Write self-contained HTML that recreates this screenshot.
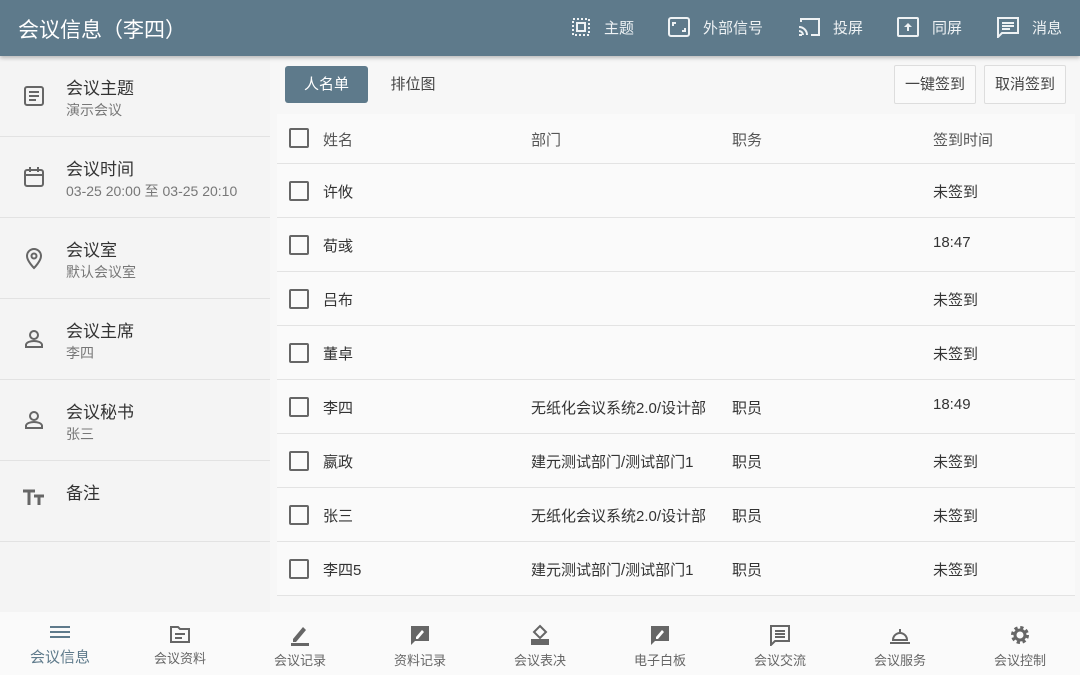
<!DOCTYPE html><html><head><meta charset="utf-8"><style>
*{margin:0;padding:0;box-sizing:border-box}
body{width:1080px;height:675px;overflow:hidden;background:#f7f7f7;font-family:"Liberation Sans","Noto Sans CJK SC",sans-serif;position:relative;color:#333}
.hdr{position:absolute;left:0;top:0;width:1080px;height:56px;background:#5e7a8b;box-shadow:0 2px 4px rgba(0,0,0,.25);z-index:2}
.hdr .t{position:absolute;left:18px;top:14px;font-size:21px;color:#fff}
.hi{position:absolute;top:16px;color:#eef2f4;font-size:15px;display:flex;align-items:center}
.hi svg{margin-right:12px}
.left{position:absolute;left:0;top:56px;width:270px;height:556px;background:#f4f4f4}
.it{position:absolute;left:0;width:270px;height:81px;border-bottom:1px solid #e2e2e2}
.it .a{position:absolute;left:66px;top:18px;font-size:17px;color:#333}
.it .b{position:absolute;left:66px;top:44px;font-size:14px;color:#777}
.it svg{position:absolute;left:22px;top:28px}
.tab{position:absolute;top:66px;height:37px;font-size:15px;line-height:37px;text-align:center}
.btn{position:absolute;top:65px;height:39px;width:82px;border:1px solid #ddd;background:#fafafa;font-size:15px;line-height:37px;text-align:center;color:#444;border-radius:2px}
.row{position:absolute;left:277px;width:798px;height:54px;border-bottom:1px solid #e3e3e3;font-size:15px;background:#fafafa}
.row span{position:absolute;top:17px}
.cb{position:absolute;left:12px;top:17px;width:20px;height:20px;border:2px solid #666;border-radius:2px}
.nav{position:absolute;left:0;top:612px;width:1080px;height:63px;background:#fafafa}
.ni{position:absolute;top:0;width:120px;text-align:center;font-size:13px;color:#666}
.ni svg{display:block;margin:10px auto 4px}
</style></head><body>
<div class="hdr"><div class="t">会议信息（李四）</div>
<div class="hi" style="left:570px"><svg width="22" height="22"><rect x="3" y="3" width="16" height="16" fill="none" stroke="#eef2f4" stroke-width="2" stroke-dasharray="2 2"/><rect x="7" y="7" width="8" height="8" fill="none" stroke="#eef2f4" stroke-width="2"/></svg>主题</div>
<div class="hi" style="left:667px"><svg width="24" height="22"><rect x="2" y="2" width="20" height="18" rx="2" fill="none" stroke="#eef2f4" stroke-width="2"/><path d="M6 10V7h3M18 12v3h-3" stroke="#eef2f4" stroke-width="2" fill="none"/></svg>外部信号</div>
<div class="hi" style="left:797px"><svg width="24" height="22"><path d="M4 6V3h18v16h-8M2 19h3M2 15a4 4 0 0 1 4 4M2 11a8 8 0 0 1 8 8" stroke="#eef2f4" stroke-width="2" fill="none"/></svg>投屏</div>
<div class="hi" style="left:896px"><svg width="24" height="22"><rect x="2" y="2" width="20" height="18" rx="1" fill="none" stroke="#eef2f4" stroke-width="2"/><path d="M12 7l-4 4h3v4h2v-4h3z" fill="#eef2f4"/></svg>同屏</div>
<div class="hi" style="left:996px"><svg width="24" height="22"><path d="M2 2h20v15H6l-4 4z" fill="none" stroke="#eef2f4" stroke-width="2"/><path d="M6 7h12M6 10h12M6 13h8" stroke="#eef2f4" stroke-width="2"/></svg>消息</div>
</div>
<div class="left">
<div class="it" style="top:0"><svg width="24" height="24"><rect x="3" y="3" width="18" height="18" rx="2" fill="none" stroke="#666" stroke-width="2"/><path d="M7 8h10M7 12h10M7 16h7" stroke="#666" stroke-width="2"/></svg><div class="a">会议主题</div><div class="b">演示会议</div></div>
<div class="it" style="top:81px"><svg width="24" height="24"><rect x="3" y="5" width="18" height="16" rx="2" fill="none" stroke="#666" stroke-width="2"/><path d="M3 10h18M8 2v5M16 2v5" stroke="#666" stroke-width="2"/></svg><div class="a">会议时间</div><div class="b">03-25 20:00 至 03-25 20:10</div></div>
<div class="it" style="top:162px"><svg width="24" height="24"><path d="M12 22s-7-7-7-12a7 7 0 0 1 14 0c0 5-7 12-7 12z" fill="none" stroke="#666" stroke-width="2"/><circle cx="12" cy="10" r="2.5" fill="none" stroke="#666" stroke-width="2"/></svg><div class="a">会议室</div><div class="b">默认会议室</div></div>
<div class="it" style="top:243px"><svg width="24" height="24"><circle cx="12" cy="8" r="4" fill="none" stroke="#666" stroke-width="2"/><path d="M4 20v-2c0-3 5-4 8-4s8 1 8 4v2z" fill="none" stroke="#666" stroke-width="2"/></svg><div class="a">会议主席</div><div class="b">李四</div></div>
<div class="it" style="top:324px"><svg width="24" height="24"><circle cx="12" cy="8" r="4" fill="none" stroke="#666" stroke-width="2"/><path d="M4 20v-2c0-3 5-4 8-4s8 1 8 4v2z" fill="none" stroke="#666" stroke-width="2"/></svg><div class="a">会议秘书</div><div class="b">张三</div></div>
<div class="it" style="top:405px"><svg width="24" height="24" style="top:24px"><path d="M1 6h12M7 6v14M12 11h10M17 11v9" stroke="#666" stroke-width="3"/></svg><div class="a">备注</div></div>
</div>
<div class="tab" style="left:285px;width:83px;background:#5e7a8b;color:#fff;border-radius:3px">人名单</div>
<div class="tab" style="left:375px;width:76px;color:#444">排位图</div>
<div class="btn" style="left:894px">一键签到</div>
<div class="btn" style="left:984px">取消签到</div>
<div class="row" style="top:114px;height:50px;color:#555"><div class="cb" style="top:14px"></div><span style="left:46px;top:15px">姓名</span><span style="left:254px;top:15px">部门</span><span style="left:455px;top:15px">职务</span><span style="left:656px;top:15px">签到时间</span></div>
<div class="row" style="top:164px"><div class="cb"></div><span style="left:46px">许攸</span><span style="left:656px">未签到</span></div>
<div class="row" style="top:218px"><div class="cb"></div><span style="left:46px">荀彧</span><span style="left:656px;top:16px">18:47</span></div>
<div class="row" style="top:272px"><div class="cb"></div><span style="left:46px">吕布</span><span style="left:656px">未签到</span></div>
<div class="row" style="top:326px"><div class="cb"></div><span style="left:46px">董卓</span><span style="left:656px">未签到</span></div>
<div class="row" style="top:380px"><div class="cb"></div><span style="left:46px">李四</span><span style="left:254px">无纸化会议系统2.0/设计部</span><span style="left:455px">职员</span><span style="left:656px;top:16px">18:49</span></div>
<div class="row" style="top:434px"><div class="cb"></div><span style="left:46px">嬴政</span><span style="left:254px">建元测试部门/测试部门1</span><span style="left:455px">职员</span><span style="left:656px">未签到</span></div>
<div class="row" style="top:488px"><div class="cb"></div><span style="left:46px">张三</span><span style="left:254px">无纸化会议系统2.0/设计部</span><span style="left:455px">职员</span><span style="left:656px">未签到</span></div>
<div class="row" style="top:542px"><div class="cb"></div><span style="left:46px">李四5</span><span style="left:254px">建元测试部门/测试部门1</span><span style="left:455px">职员</span><span style="left:656px">未签到</span></div>
<div class="nav">
<div class="ni" style="left:0;font-size:15px;color:#5e7a8b"><svg width="22" height="20"><path d="M1 5h20M1 10h20M1 15h20" stroke="#5e7a8b" stroke-width="2"/></svg>会议信息</div>
<div class="ni" style="left:120px;padding-top:2px"><svg width="22" height="20"><path d="M2 3h7l2 2h9v13H2z" fill="none" stroke="#666" stroke-width="2"/><path d="M6 10h10M6 14h7" stroke="#666" stroke-width="2"/></svg>会议资料</div>
<div class="ni" style="left:240px;padding-top:2px"><svg width="22" height="22"><path d="M4 15l10-12 3 3-10 12H4z" fill="#666"/><rect x="2" y="19" width="18" height="3" fill="#666"/></svg>会议记录</div>
<div class="ni" style="left:360px;padding-top:2px"><svg width="22" height="22"><path d="M2 2h18v15H6l-4 4z" fill="#666"/><path d="M7 13l6-7 2 2-6 7H7z" fill="#fff"/></svg>资料记录</div>
<div class="ni" style="left:480px;padding-top:2px"><svg width="22" height="22"><path d="M11 2l6 6-6 6-6-6z" fill="none" stroke="#666" stroke-width="2"/><rect x="2" y="15" width="18" height="6" fill="#666"/></svg>会议表决</div>
<div class="ni" style="left:600px;padding-top:2px"><svg width="22" height="22"><path d="M2 2h18v15H6l-4 4z" fill="#666"/><path d="M7 13l6-7 2 2-6 7H7z" fill="#fff"/></svg>电子白板</div>
<div class="ni" style="left:720px;padding-top:2px"><svg width="22" height="22"><path d="M2 2h18v15H6l-4 4z" fill="none" stroke="#666" stroke-width="2"/><path d="M6 7h10M6 10h10M6 13h10" stroke="#666" stroke-width="2"/></svg>会议交流</div>
<div class="ni" style="left:840px;padding-top:2px"><svg width="22" height="22"><path d="M4 16a7 7 0 0 1 14 0z" fill="none" stroke="#666" stroke-width="2"/><path d="M1 19h20M11 5v3" stroke="#666" stroke-width="2"/></svg>会议服务</div>
<div class="ni" style="left:960px;padding-top:2px"><svg width="22" height="22"><circle cx="11" cy="11" r="7" fill="none" stroke="#666" stroke-width="4" stroke-dasharray="3 2.5"/><circle cx="11" cy="11" r="5" fill="none" stroke="#666" stroke-width="3"/></svg>会议控制</div>
</div>
</body></html>
